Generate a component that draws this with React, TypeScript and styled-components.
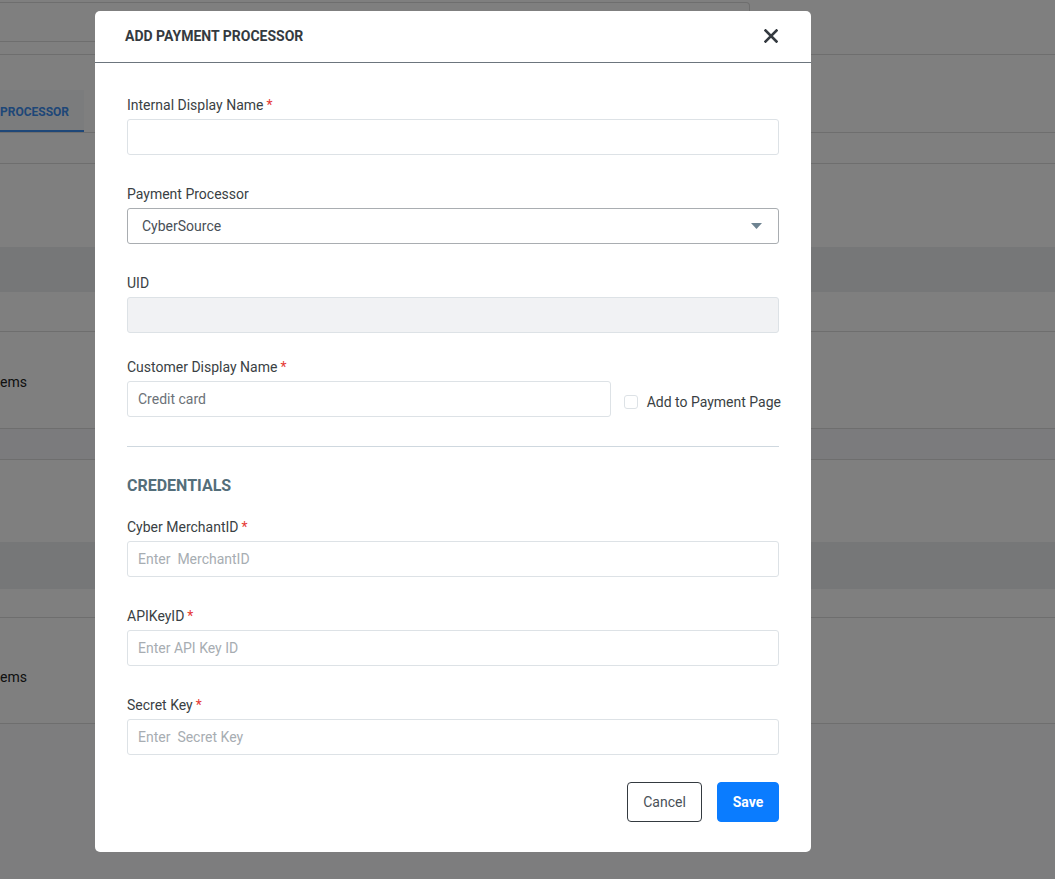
import styled, { createGlobalStyle } from 'styled-components';

const GlobalStyle = createGlobalStyle`
  html, body {
    margin: 0;
    padding: 0;
  }
  body {
    font-family: Roboto, 'Liberation Sans', Arial, sans-serif;
    color: #343a40;
    background: #ffffff;
  }
  * {
    box-sizing: border-box;
  }
`;

// ---------- page behind the modal ----------

const Page = styled.div`
  height: 879px;
  overflow: hidden;
  background: #ffffff;
`;

const SearchBar = styled.div`
  height: 55px;
  padding-top: 2px;
  border-bottom: 1px solid #dcdcdc;
`;

const SearchInput = styled.div`
  width: 750px;
  height: 40px;
  border: 1px solid #dcdcdc;
  border-left: none;
  border-radius: 0 4px 4px 0;
`;

const TabsArea = styled.div`
  height: 78px;
  padding-top: 35px;
  border-bottom: 1px solid #dcdcdc;
  display: flex;
`;

const Tab = styled.div<{ $active?: boolean }>`
  width: 84px;
  height: 42px;
  padding-top: 3px;
  display: flex;
  align-items: center;
  font-size: 12px;
  font-weight: 700;
  color: ${(p) => (p.$active ? '#3d8ef0' : '#555')};
  background: ${(p) => (p.$active ? '#f7f8fa' : 'transparent')};
  border-bottom: 2px solid ${(p) => (p.$active ? '#3d8ef0' : 'transparent')};
`;

const Band = styled.div<{ $h: number; $bg?: string; $line?: boolean; $pad?: number }>`
  height: ${(p) => p.$h}px;
  padding-top: ${(p) => p.$pad ?? 0}px;
  background: ${(p) => p.$bg ?? '#ffffff'};
  border-bottom: ${(p) => (p.$line ? '1px solid #dcdcdc' : 'none')};
  font-size: 14px;
  line-height: 16px;
  color: #222;
`;

// ---------- modal ----------

const Overlay = styled.div`
  position: fixed;
  inset: 0;
  background: rgba(0, 0, 0, 0.5);
  padding: 11px 0 0 95px;
`;

const Modal = styled.div`
  width: 716px;
  background: #ffffff;
  border-radius: 5px;
  overflow: hidden;
`;

const ModalHeader = styled.div`
  height: 52px;
  padding: 0 31px 1px 30px;
  display: flex;
  align-items: center;
  justify-content: space-between;
  border-bottom: 1px solid #6c757d;
`;

const Title = styled.h2`
  margin: 0;
  font-size: 14px;
  font-weight: 700;
  color: #343a40;
`;

const CloseButton = styled.button`
  width: 18px;
  height: 18px;
  padding: 0;
  border: none;
  background: transparent;
  display: flex;
  align-items: center;
  justify-content: center;
  cursor: pointer;
`;

const ModalBody = styled.div`
  padding: 32px 32px 30px 32px;
`;

const Field = styled.div<{ $gap?: number }>`
  margin-bottom: ${(p) => p.$gap ?? 29}px;
`;

const Label = styled.label`
  display: block;
  font-size: 14px;
  line-height: 21px;
  color: #3a3f44;
  margin-bottom: 3px;
`;

const Required = styled.span`
  color: #e53935;
  margin-left: 3px;
`;

const Input = styled.input<{ $disabled?: boolean }>`
  display: block;
  width: 100%;
  height: 36px;
  border: 1px solid #dde2e6;
  border-radius: 3px;
  padding: 0 10px;
  font-family: inherit;
  font-size: 14px;
  color: #6c7278;
  background: ${(p) => (p.$disabled ? '#f1f2f4' : '#ffffff')};
  outline: none;
  &::placeholder {
    color: #a7adb2;
  }
`;

const Select = styled.div`
  height: 36px;
  border: 1px solid #a9adb1;
  border-radius: 3px;
  padding: 0 16px 0 14px;
  display: flex;
  align-items: center;
  justify-content: space-between;
  font-size: 14px;
  color: #495057;
`;

const InlineRow = styled.div`
  display: flex;
  align-items: center;
  gap: 13px;
`;

const CheckLabel = styled.label`
  display: flex;
  align-items: center;
  gap: 9px;
  flex-shrink: 0;
  margin: 6px -2px 0 0;
  font-size: 14px;
  color: #3a3f44;
  white-space: nowrap;
`;

const CheckBox = styled.span`
  width: 14px;
  height: 14px;
  border: 1px solid #dde2e6;
  border-radius: 3px;
  background: #ffffff;
`;

const Divider = styled.hr`
  margin: 0 0 27px 0;
  border: none;
  border-top: 1px solid #cfd8df;
`;

const SectionTitle = styled.h3`
  margin: 0 0 19px 0;
  font-size: 16px;
  line-height: 24px;
  font-weight: 700;
  color: #546e7a;
`;

const Footer = styled.div`
  display: flex;
  justify-content: flex-end;
  gap: 15px;
  margin-top: 27px;
`;

const Button = styled.button<{ $primary?: boolean }>`
  width: ${(p) => (p.$primary ? 62 : 75)}px;
  height: 40px;
  padding: 0;
  border-radius: 4px;
  font-family: inherit;
  font-size: 14px;
  font-weight: ${(p) => (p.$primary ? 700 : 400)};
  color: ${(p) => (p.$primary ? '#ffffff' : '#495057')};
  background: ${(p) => (p.$primary ? '#0a7cff' : '#ffffff')};
  border: 1px solid ${(p) => (p.$primary ? '#0a7cff' : '#343a40')};
  cursor: pointer;
`;

const CloseIcon = () => (
  <svg width='14' height='14' viewBox='0 0 14 14'>
    <path d='M1.5 1.5 L12.5 12.5 M12.5 1.5 L1.5 12.5' stroke='#343a40' strokeWidth='2.6' strokeLinecap='square' />
  </svg>
);

const Caret = () => (
  <svg width='11' height='6' viewBox='0 0 11 6'>
    <path d='M0 0 H11 L5.5 6 Z' fill='#6e8391' />
  </svg>
);

const App = () => {
  return (
    <>
      <GlobalStyle />
      <Page>
        <SearchBar>
          <SearchInput />
        </SearchBar>
        <TabsArea>
          <Tab $active>PROCESSOR</Tab>
        </TabsArea>
        <Band $h={31} $line />
        <Band $h={83} />
        <Band $h={45} $bg='#edeef1' />
        <Band $h={40} $line />
        <Band $h={97} $line $pad={42}>
          ems
        </Band>
        <Band $h={31} $bg='#f6f7fa' $line />
        <Band $h={82} />
        <Band $h={47} $bg='#edeef1' />
        <Band $h={29} $line />
        <Band $h={106} $line $pad={51}>
          ems
        </Band>
        <Band $h={160} $bg='#fafbfc' />
      </Page>

      <Overlay>
        <Modal>
          <ModalHeader>
            <Title>ADD PAYMENT PROCESSOR</Title>
            <CloseButton type='button' aria-label='Close'>
              <CloseIcon />
            </CloseButton>
          </ModalHeader>

          <ModalBody>
            <Field>
              <Label>
                Internal Display Name<Required>*</Required>
              </Label>
              <Input />
            </Field>

            <Field>
              <Label>Payment Processor</Label>
              <Select>
                CyberSource
                <Caret />
              </Select>
            </Field>

            <Field $gap={24}>
              <Label>UID</Label>
              <Input $disabled disabled />
            </Field>

            <Field>
              <Label>
                Customer Display Name<Required>*</Required>
              </Label>
              <InlineRow>
                <Input defaultValue='Credit card' />
                <CheckLabel>
                  <CheckBox />
                  Add to Payment Page
                </CheckLabel>
              </InlineRow>
            </Field>

            <Divider />
            <SectionTitle>CREDENTIALS</SectionTitle>

            <Field>
              <Label>
                Cyber MerchantID<Required>*</Required>
              </Label>
              <Input placeholder='Enter  MerchantID' />
            </Field>

            <Field>
              <Label>
                APIKeyID<Required>*</Required>
              </Label>
              <Input placeholder='Enter API Key ID' />
            </Field>

            <Field $gap={0}>
              <Label>
                Secret Key<Required>*</Required>
              </Label>
              <Input placeholder='Enter  Secret Key' />
            </Field>

            <Footer>
              <Button type='button'>Cancel</Button>
              <Button type='button' $primary>
                Save
              </Button>
            </Footer>
          </ModalBody>
        </Modal>
      </Overlay>
    </>
  );
};

export default App;
